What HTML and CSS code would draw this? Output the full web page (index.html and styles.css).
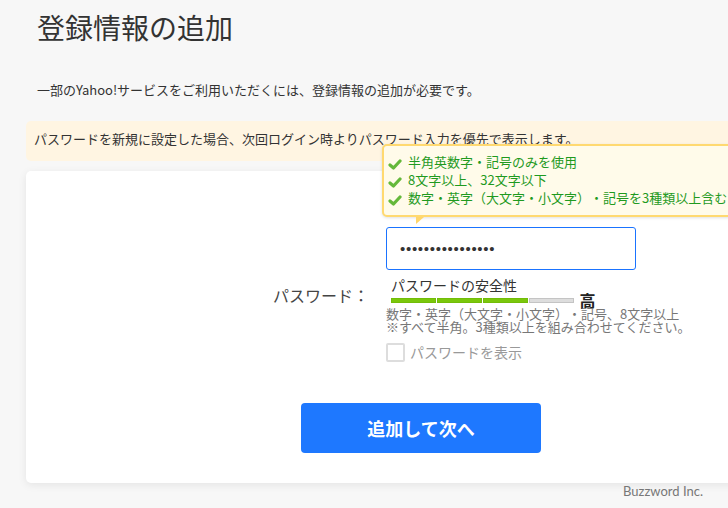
FILE: index.html
```html
<!DOCTYPE html>
<html lang="ja">
<head>
    <meta charset="UTF-8">
    <meta name="viewport" content="width=device-width, initial-scale=1.0">
    <title>登録情報の追加</title>
    <link rel="stylesheet" href="styles.css">
</head>
<body>
    <div class="page">
        <h1>登録情報の追加</h1>
        <p class="lead">一部のYahoo!サービスをご利用いただくには、登録情報の追加が必要です。</p>

        <div class="notice">パスワードを新規に設定した場合、次回ログイン時よりパスワード入力を優先で表示します。</div>

        <div class="card">
            <div class="form-row">
                <label class="form-label" for="password">パスワード：</label>
                <div class="field">
                    <!-- Password rules tooltip -->
                    <div class="rules">
                        <div class="rule">
                            <svg class="check" viewBox="0 0 14 12" width="14" height="12"><path d="M2 7 L5.5 10 L12 3" fill="none" stroke="#64b83a" stroke-width="3.2" stroke-linecap="round" stroke-linejoin="round"/></svg>
                            半角英数字・記号のみを使用
                        </div>
                        <div class="rule">
                            <svg class="check" viewBox="0 0 14 12" width="14" height="12"><path d="M2 7 L5.5 10 L12 3" fill="none" stroke="#64b83a" stroke-width="3.2" stroke-linecap="round" stroke-linejoin="round"/></svg>
                            8文字以上、32文字以下
                        </div>
                        <div class="rule">
                            <svg class="check" viewBox="0 0 14 12" width="14" height="12"><path d="M2 7 L5.5 10 L12 3" fill="none" stroke="#64b83a" stroke-width="3.2" stroke-linecap="round" stroke-linejoin="round"/></svg>
                            数字・英字（大文字・小文字）・記号を3種類以上含む
                        </div>
                    </div>

                    <div class="password-input" id="password">••••••••••••••••</div>

                    <div class="strength-title">パスワードの安全性</div>
                    <div class="strength">
                        <div class="meter">
                            <span class="seg on"></span>
                            <span class="seg on"></span>
                            <span class="seg on"></span>
                            <span class="seg"></span>
                        </div>
                        <span class="level">高</span>
                    </div>
                    <p class="help">数字・英字（大文字・小文字）・記号、8文字以上<br>※すべて半角。3種類以上を組み合わせてください。</p>

                    <label class="show-pass">
                        <span class="box"></span>
                        パスワードを表示
                    </label>
                </div>
            </div>

            <div class="actions">
                <button type="button" class="btn-primary">追加して次へ</button>
            </div>
        </div>
    </div>

    <div class="footer">Buzzword Inc.</div>
</body>
</html>
```

FILE: styles.css
```css
html, body {
    overflow: hidden;
}
body {
    margin: 0;
    padding: 0;
    width: 728px;
    height: 508px;
    background: #f7f7f7;
    color: #333;
    font-family: "Noto Sans CJK JP", "Noto Sans", sans-serif;
    text-spacing-trim: space-all;
}
.page {
    width: 790px;
    margin-left: 26px;
}
h1 {
    margin: 0;
    padding: 7px 0 0 11px;
    font-size: 28px;
    font-weight: normal;
    line-height: 40px;
    color: #333;
}
.lead {
    margin: 34px 0 0 11px;
    font-size: 13px;
    line-height: 18px;
}
.notice {
    margin-top: 22px;
    padding: 9px 8px 13px;
    background: #fff5e2;
    border-radius: 5px;
    font-size: 13px;
    line-height: 18px;
    white-space: nowrap;
}
.card {
    margin-top: 10px;
    padding: 56px 0 30px;
    background: #fff;
    border-radius: 5px;
    box-shadow: 0 2px 8px rgba(0, 0, 0, 0.08);
}
.form-row {
    display: flex;
    align-items: center;
}
.form-label {
    width: 343px;
    margin-right: 17px;
    text-align: right;
    font-size: 16px;
    color: #444;
}
.field {
    position: relative;
    width: 250px;
}
.rules {
    position: absolute;
    left: -4px;
    bottom: calc(100% + 10px);
    width: 380px;
    padding: 7px 0 8px 4px;
    background: #fffbea;
    border: 2px solid #ffd970;
    border-radius: 5px;
    box-shadow: 0 1px 3px rgba(0, 0, 0, 0.12);
    white-space: nowrap;
    z-index: 2;
}
.rules::after {
    content: "";
    position: absolute;
    left: 32px;
    top: 100%;
    margin-top: 2px;
    width: 0;
    height: 0;
    border-top: 7px solid #ffd66a;
    border-right: 8px solid transparent;
}
.rule {
    display: flex;
    align-items: center;
    font-size: 13px;
    line-height: 18px;
    color: #1f9a1f;
}
.check {
    margin: 3px 6px 0 0;
}
.password-input {
    box-sizing: border-box;
    height: 43px;
    padding: 0 13px;
    border: 1px solid #1a73ff;
    border-radius: 3px;
    font-family: "Liberation Sans", sans-serif;
    font-size: 15px;
    line-height: 41px;
    letter-spacing: 0.7px;
    color: #333;
}
.strength-title {
    margin: 7px 0 0 5px;
    font-size: 14px;
    line-height: 16px;
}
.strength {
    display: flex;
    align-items: center;
    height: 16px;
    margin: -1px 0 0 5px;
}
.meter {
    display: flex;
    gap: 1.5px;
}
.seg {
    box-sizing: border-box;
    width: 44.5px;
    height: 5px;
    background: #ddd;
    border: 1px solid #c4c4c4;
}
.seg.on {
    background: #7ac70c;
    border-color: #72bd08;
}
.level {
    margin-left: 6px;
    font-size: 16px;
    font-weight: bold;
    color: #222;
}
.help {
    margin: 0;
    font-size: 13px;
    line-height: 12.5px;
    color: #777;
    white-space: nowrap;
}
.show-pass {
    display: flex;
    align-items: center;
    margin-top: 9px;
    font-size: 14px;
    color: #999;
}
.show-pass .box {
    box-sizing: border-box;
    width: 19px;
    height: 19px;
    margin-right: 5px;
    border: 2px solid #ddd;
    border-radius: 2px;
}
.actions {
    margin-top: 41px;
    text-align: center;
}
.btn-primary {
    width: 240px;
    height: 50px;
    background: #1e78ff;
    color: #fff;
    border: none;
    border-radius: 4px;
    font-family: "Noto Sans CJK JP", sans-serif;
    font-size: 18px;
    font-weight: bold;
    cursor: pointer;
}
.footer {
    padding-right: 25px;
    text-align: right;
    font-family: Lato, "Noto Sans", sans-serif;
    font-size: 13px;
    line-height: 16px;
    color: #777;
}
```
